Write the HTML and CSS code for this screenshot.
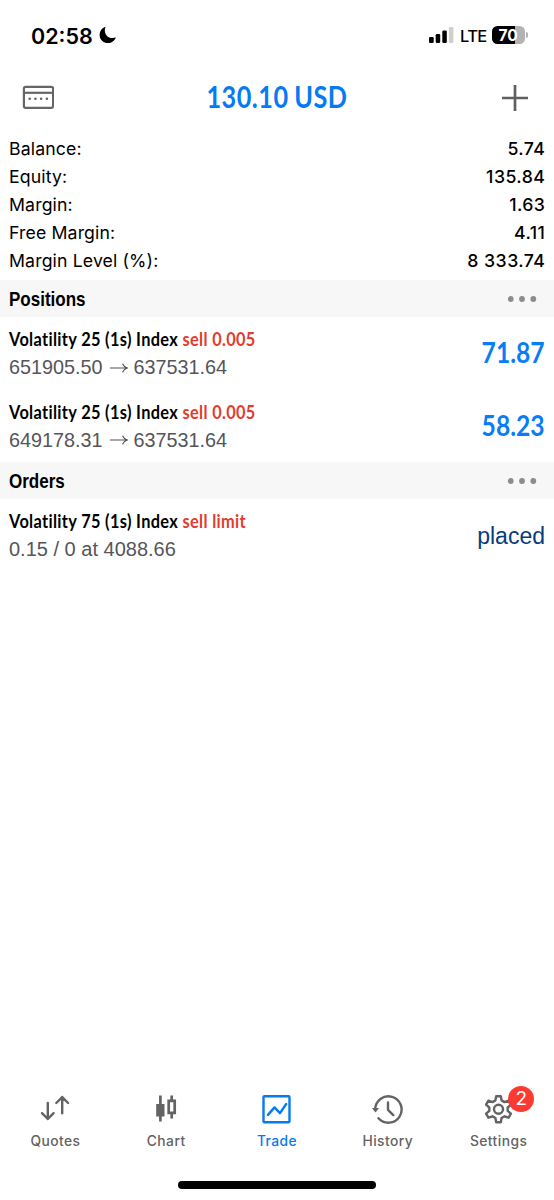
FILE: index.html
```
<!DOCTYPE html>
<html lang="en">
<head>
<meta charset="utf-8">
<title>Trade</title>
<link rel="stylesheet" href="styles.css">
</head>
<body>
<div class="app">
  <div class="status">
    <span class="clock">02:58</span>
    <svg class="moon" width="18" height="18" viewBox="0 0 18 18"><path d="M6.600.8C5.300 3.400 5.600 7.100 7.600 9.400c2.300 2.700 6.300 3.200 9.300 1.900C15.600 15 12.500 17.100 9 17.100 4.300 17.100.6 13.600.6 9 .6 5.100 3 1.900 6.600.8Z"/></svg>
    <svg class="signal" width="25" height="18" viewBox="0 0 25 18"><rect x="0" y="11" width="4.700" height="6" rx="1.300"/><rect x="6.700" y="8" width="4.500" height="9" rx="1.300"/><rect x="13.300" y="4.500" width="4.500" height="12.500" rx="1.300"/><rect class="dim" x="19.900" y="1" width="4.500" height="16" rx="1.300"/></svg>
    <span class="lte">LTE</span>
    <div class="battery"><span class="level">70</span></div>
    <span class="cap"></span>
  </div>
  <header class="bar">
    <svg class="card" width="32" height="24" viewBox="0 0 32 24"><rect x="1.900" y="1.800" width="29.200" height="21" rx="1.800"/><path d="M1.900 7.800h29.200"/><path class="dots" d="M7.700 13.800h.01M13.400 13.800h.01M19.100 13.800h.01M24.900 13.800h.01"/></svg>
    <h1 class="total"><span>130.10 USD</span></h1>
    <svg class="plus" width="27" height="27" viewBox="0 0 27 27"><path d="M14 1v26M1 14h26"/></svg>
  </header>
  <dl class="summary">
    <div class="line"><dt>Balance:</dt><dd>5.74</dd></div>
    <div class="line"><dt>Equity:</dt><dd>135.84</dd></div>
    <div class="line"><dt>Margin:</dt><dd>1.63</dd></div>
    <div class="line"><dt>Free Margin:</dt><dd>4.11</dd></div>
    <div class="line"><dt>Margin Level (%):</dt><dd>8 333.74</dd></div>
  </dl>
  <div class="section"><h2>Positions</h2><svg class="more" width="30" height="8" viewBox="0 0 30 8"><circle cx="3.700" cy="4" r="2.900"/><circle cx="15" cy="4" r="2.900"/><circle cx="26.300" cy="4" r="2.900"/></svg></div>
  <div class="item">
    <div class="info"><div class="name">Volatility 25 (1s) Index <span class="side">sell 0.005</span></div>
    <div class="price"><span>651905.50</span><svg class="arrow" width="18" height="10" viewBox="0 0 18 10"><path d="M0 5h17M12.500.8C13.500 3 15 4.300 17.300 5 15 5.700 13.500 7 12.500 9.200"/></svg><span>637531.64</span></div></div>
    <div class="profit">71.87</div>
  </div>
  <div class="item">
    <div class="info"><div class="name">Volatility 25 (1s) Index <span class="side">sell 0.005</span></div>
    <div class="price"><span>649178.31</span><svg class="arrow" width="18" height="10" viewBox="0 0 18 10"><path d="M0 5h17M12.500.8C13.500 3 15 4.300 17.300 5 15 5.700 13.500 7 12.500 9.200"/></svg><span>637531.64</span></div></div>
    <div class="profit">58.23</div>
  </div>
  <div class="section"><h2>Orders</h2><svg class="more" width="30" height="8" viewBox="0 0 30 8"><circle cx="3.700" cy="4" r="2.900"/><circle cx="15" cy="4" r="2.900"/><circle cx="26.300" cy="4" r="2.900"/></svg></div>
  <div class="item">
    <div class="info"><div class="name">Volatility 75 (1s) Index <span class="side">sell limit</span></div>
    <div class="price order">0.15 / 0 at 4088.66</div></div>
    <div class="placed">placed</div>
  </div>
  <nav class="tabs">
    <div class="tab"><svg width="32" height="32" viewBox="0 0 32 32"><path d="M8.800 8v16M3 18.200l5.800 5.800 5.800-5.800M23.200 18.300V2M17.300 8l5.900-5.900L29.100 8"/></svg><span>Quotes</span></div>
    <div class="tab"><svg width="32" height="32" viewBox="0 0 32 32"><path class="thick" d="M10.400.5v26M21.700.5v5M21.700 18v5.500"/><path class="fill" d="M6.200 9h8.300v12.500H6.200z"/><path class="thick" d="M18.700 5.800h6v12h-6z"/></svg><span>Chart</span></div>
    <div class="tab active"><svg width="32" height="32" viewBox="0 0 32 32"><rect x="2.500" y="1.200" width="26" height="26" rx="1"/><path d="M7 19.900l6.500-7.500 5.500 5.800 6.200-9.200"/></svg><span>Trade</span></div>
    <div class="tab"><svg width="32" height="32" viewBox="0 0 32 32"><path d="M3.200 14.500A13.200 13.200 0 1 1 6.500 23.200M16 7.500v7.300l5.300 5.300"/><path class="fill" d="M0 13h7L3.500 17.500z"/></svg><span>History</span></div>
    <div class="tab"><svg width="32" height="32" viewBox="0 0 32 32"><path d="M13.200 1.200h4.600l.8 4.200 2.900 1.700 4.100-1.400 2.300 4-3.200 2.800v3.400l3.200 2.800-2.300 4-4.100-1.400-2.900 1.700-.8 4.200h-4.600l-.8-4.200-2.900-1.700-4.100 1.400-2.300-4 3.200-2.800v-3.400L3.100 9.700l2.300-4L9.500 7.100l2.900-1.700z"/><circle cx="15.500" cy="14.200" r="4.500"/></svg><span>Settings</span><b class="badge">2</b></div>
  </nav>
  <div class="home"></div>
</div>
</body>
</html>
```
FILE: styles.css
```
* { box-sizing: border-box; margin: 0; padding: 0; }
body { background: #fff; color: #000; font-family: Inter, "Liberation Sans", sans-serif; }
svg { display: block; flex: none; }
.app { display: flex; flex-direction: column; width: 554px; height: 1200px; overflow: hidden; }

.status { display: flex; align-items: center; height: 70px; padding: 0 27px 0 31px; flex: none; }
.clock { font-size: 21.5px; font-weight: 600; width: 62px; padding-top: 1px; white-space: nowrap; }
.moon { margin-left: 6px; }
.signal { margin-left: auto; }
.signal .dim { fill: #cfcfcf; }
.lte { width: 27px; margin-left: 6px; padding-top: 1px; font-size: 16.5px; font-weight: 500; letter-spacing: -.6px; }
.battery { width: 33px; height: 18px; margin-left: 5px; border-radius: 5.500px; background: linear-gradient(90deg, #000 23px, #b3b3b3 23px); text-align: center; }
.level { display: block; color: #fff; font-size: 15.5px; font-weight: 700; line-height: 19px; padding-right: 1px; }
.cap { width: 2px; height: 6px; margin-left: 1px; margin-right: -1px; border-radius: 0 2px 2px 0; background: #b3b3b3; }

.bar { display: flex; align-items: center; justify-content: space-between; height: 54px; padding: 0 26px 0 22px; flex: none; }
.card { fill: none; stroke: #666; stroke-width: 2.200; }
.card .dots { stroke-width: 2.600; stroke-linecap: round; }
.total { width: 140px; margin: 0 1px 3px 0; display: flex; justify-content: center; white-space: nowrap; color: #067af5; font: 700 30px/40px Lato, sans-serif; letter-spacing: .6px; word-spacing: -1px; }
.total span { transform: scaleX(.84); }
.plus { stroke: #606060; stroke-width: 2.700; }

.summary { height: 156px; padding: 11px 9px 0; flex: none; }
.line { display: flex; justify-content: space-between; height: 28px; line-height: 28px; font-size: 17.7px; }
.line dt { letter-spacing: .12px; }
.line dd { font-weight: 500; letter-spacing: .45px; margin-right: -.4px; }

.section { display: flex; align-items: center; justify-content: space-between; height: 37px; padding: 0 17.5px 0 9px; background: #f7f7f7; flex: none; }
.section h2 { font: 700 20.5px/38px "Liberation Sans", sans-serif; transform: scaleX(.83); transform-origin: 0 50%; }
.more { fill: #8c8c8c; }
.item { display: flex; justify-content: space-between; height: 72.5px; padding: 0 9px; flex: none; }
.info { padding-top: 9px; width: 300px; }
.name { font: 700 19px/26px Lato, sans-serif; white-space: nowrap; letter-spacing: .4px; font-variant-ligatures: none; transform: scaleX(.86); transform-origin: 0 50%; }
.side { color: #e23c2e; }
.price { display: flex; align-items: center; height: 31.5px; color: #55555a; font: 19.8px/31.5px "Liberation Sans", sans-serif; white-space: pre; }
.order { font-size: 20px; }
.arrow { margin: 0 6px 0 7px; fill: none; stroke: #55555a; stroke-width: 1.200; }
.profit { color: #087df5; font: 700 28px/71px Lato, sans-serif; transform: scaleX(.88); transform-origin: 100% 50%; }
.placed { color: #083c7c; font: 23px/75px "Liberation Sans", sans-serif; }

.tabs { display: grid; grid-template-columns: repeat(5, 1fr); margin-top: auto; height: 86px; flex: none; }
.tab { position: relative; display: flex; flex-direction: column; align-items: center; color: #636363; font-size: 13.8px; font-weight: 450; line-height: 20px; letter-spacing: .45px; }
.tab svg { fill: none; stroke: currentColor; stroke-width: 2.400; stroke-linejoin: round; stroke-linecap: round; margin: 0 0 4px; }
.tab .fill { fill: currentColor; stroke: none; }
.tab .thick { stroke-linecap: butt; stroke-linejoin: miter; stroke-width: 2.700; }
.tab.active { color: #087aed; }
.badge { position: absolute; left: 65px; top: -9px; width: 26px; height: 26px; border-radius: 50%; background: #fb3a31; color: #fff; text-align: center; font-weight: 400; font-size: 19px; line-height: 26px; letter-spacing: 0; }
.home { width: 198px; height: 7.500px; margin: 0 auto 11.500px; border-radius: 4px; background: #000; flex: none; }
```
